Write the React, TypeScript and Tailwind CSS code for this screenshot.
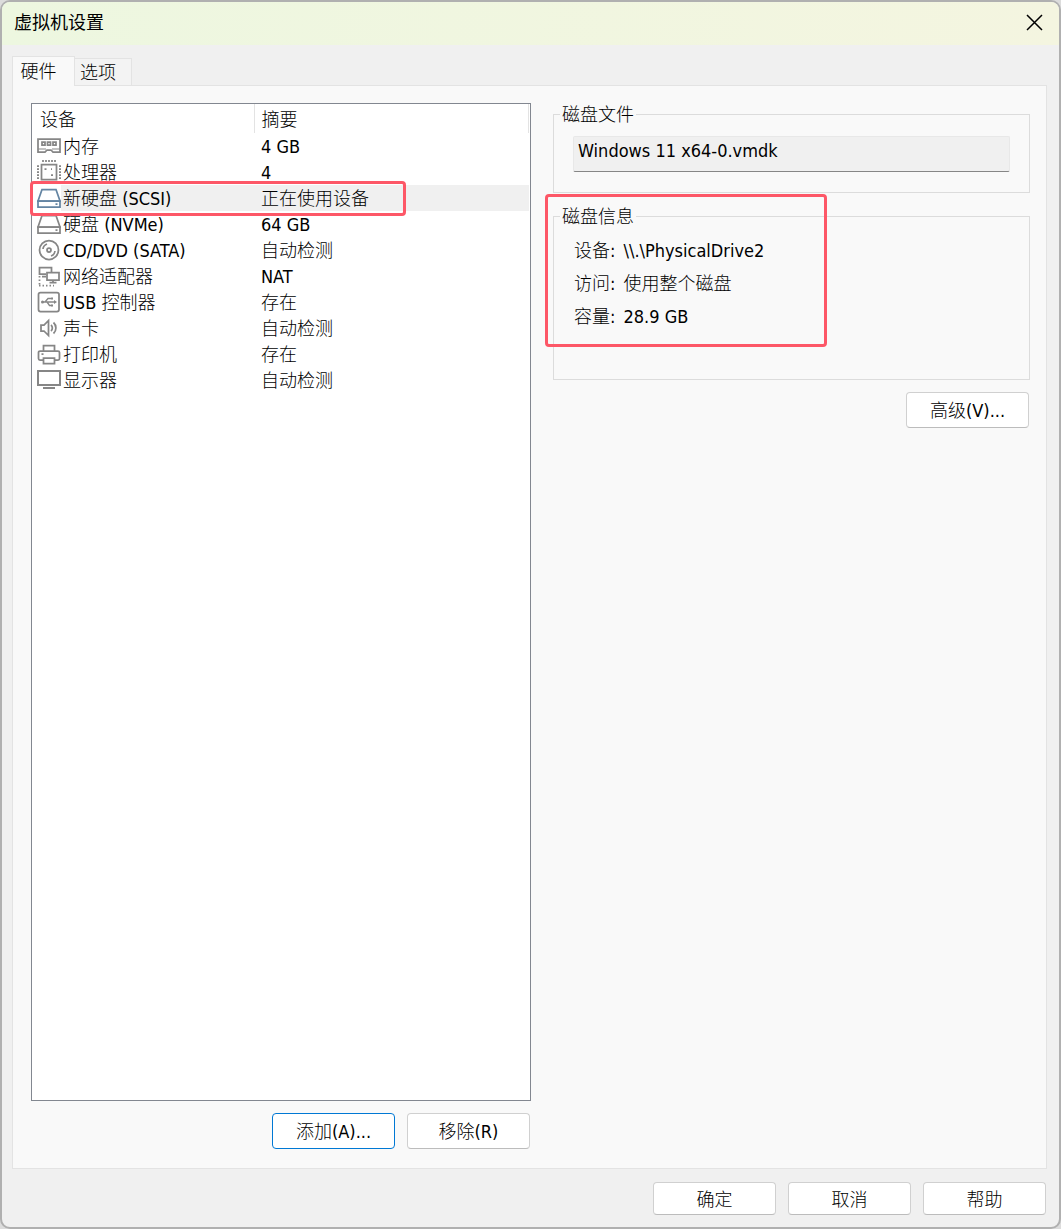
import { useState } from "react";
import type { ReactNode } from "react";
import clsx from "clsx";

type Device = {
  name: string;
  summary: string;
  icon: ReactNode;
};

const diskIcon = (
  <>
    <path d="M5 4.5h14L23 16H1z" />
    <path d="M1 16h22v6H1z" />
    <path d="M18.5 19h2" />
  </>
);

const devices: Device[] = [
  {
    name: "内存",
    summary: "4 GB",
    icon: (
      <>
        <path d="M1 6h22v13h-7l-2-2h-4l-2 2H1z" />
        <path d="M1 16h8M15 16h8" strokeWidth="1" />
        <path d="M5 9h3v3H5zM10.5 9h3v3h-3zM16 9h3v3h-3z" />
      </>
    ),
  },
  {
    name: "处理器",
    summary: "4",
    icon: (
      <>
        <path d="M4.5 5.5h15v15h-15z" />
        <path d="M6 1v2M9 1v2M12 1v2M15 1v2M18 1v2M6 23v2M9 23v2M12 23v2M15 23v2M18 23v2" />
        <path d="M0 7h2M0 10h2M0 13h2M0 16h2M0 19h2M22 7h2M22 10h2M22 13h2M22 16h2M22 19h2" />
        <path d="M7.500 10h2M14 10h1M14 16h2" />
      </>
    ),
  },
  { name: "新硬盘 (SCSI)", summary: "正在使用设备", icon: diskIcon },
  { name: "硬盘 (NVMe)", summary: "64 GB", icon: diskIcon },
  {
    name: "CD/DVD (SATA)",
    summary: "自动检测",
    icon: (
      <>
        <circle cx="12" cy="13" r="9.5" />
        <circle cx="12" cy="13" r="2" />
        <path d="M6 12a6 6 0 0 1 4-5M18 14a6 6 0 0 1-4 5" />
      </>
    ),
  },
  {
    name: "网络适配器",
    summary: "NAT",
    icon: (
      <>
        <path d="M9 11H2.5V4.5h12V9" />
        <path d="M10 9.5h12V17H10zM16 17v2.5M12.5 19.5h7M5 13.5h4" />
        <path d="M2.5 13v10M2 22.5h15" strokeDasharray="1.5 2" />
      </>
    ),
  },
  {
    name: "USB 控制器",
    summary: "存在",
    icon: (
      <>
        <rect x="1.5" y="3.5" width="20.5" height="19" rx="2" />
        <path d="M5 13h13M8 13l3-3.5h3M10 13l2.5 3.5h2" strokeWidth="1.3" />
        <path d="M17 11l3 2-3 2z" fill="currentColor" stroke="none" />
        <path
          d="M14 8.5h2v2h-2zM14 15.5h2v2h-2z"
          fill="currentColor"
          stroke="none"
        />
        <circle cx="5.5" cy="13" r="1.5" fill="currentColor" stroke="none" />
      </>
    ),
  },
  {
    name: "声卡",
    summary: "自动检测",
    icon: (
      <>
        <path d="M4 10h3l4.5-4.5v15L7 16H4z" />
        <path d="M14 10a4 4 0 0 1 0 6M16.5 7.5a7.5 7.5 0 0 1 0 11" />
      </>
    ),
  },
  {
    name: "打印机",
    summary: "存在",
    icon: (
      <>
        <path d="M6.5 10V4.5h11V10" />
        <path d="M6 19H3a1.5 1.5 0 0 1-1.5-1.5v-6A1.5 1.5 0 0 1 3 10h18a1.5 1.5 0 0 1 1.5 1.5v6A1.5 1.5 0 0 1 21 19h-3" />
        <path d="M6.5 17h11v5.5h-11zM4.5 13h2" />
      </>
    ),
  },
  {
    name: "显示器",
    summary: "自动检测",
    icon: (
      <>
        <path d="M1 4h22v14H1z" strokeWidth="2" />
        <path d="M6 21h12" strokeWidth="2" />
      </>
    ),
  },
];

const diskInfo = [
  { label: "设备:", value: "\\\\.\\PhysicalDrive2" },
  { label: "访问:", value: "使用整个磁盘" },
  { label: "容量:", value: "28.9 GB" },
];

// Red frame drawn over a part of the dialog
function Highlight({ className }: { className: string }) {
  return (
    <span
      className={clsx(
        "pointer-events-none absolute z-10 rounded border-3 border-[#fd5767]",
        className,
      )}
    />
  );
}

function Button({
  children,
  primary,
  className,
}: {
  children: ReactNode;
  primary?: boolean;
  className?: string;
}) {
  return (
    <button
      type="button"
      className={clsx(
        "flex w-[123px] items-center justify-center rounded border bg-white pt-0.5",
        primary ? "border-[#0078d4]" : "border-[#d0d0d0] border-b-[#bcbcbc]",
        className,
      )}
    >
      {children}
    </button>
  );
}

export default function App() {
  const [selected, setSelected] = useState(2);

  return (
    <div className="flex min-h-screen bg-[#dcdcdc] font-['DejaVu_Sans_Condensed','Noto_Sans_CJK_SC',sans-serif] text-lg leading-[22px] font-light text-black">
      <main className="flex flex-1 flex-col overflow-hidden rounded-[10px] border-2 border-[#b0b0b0] bg-[#f0f0f0]">
        <header className="flex h-[43px] items-center justify-between bg-linear-to-r from-[#edf7e0] to-[#f4f5e0] pr-4 pb-0.5 pl-3">
          <h1 className="font-normal">虚拟机设置</h1>
          <button type="button" aria-label="关闭">
            <svg
              width="17"
              height="17"
              viewBox="0 0 17 17"
              stroke="currentColor"
              strokeWidth="1.5"
            >
              <path d="M1 1l15 15M16 1L1 16" />
            </svg>
          </button>
        </header>

        <div className="flex flex-1 flex-col pt-[11px] pr-3 pb-3 pl-2.5">
          <div role="tablist" className="flex items-end">
            <button
              type="button"
              role="tab"
              aria-selected="true"
              className="z-10 -mb-px h-[30px] w-[63px] border border-b-0 border-[#e3e3e3] bg-[#f9f9f9] pr-2.5"
            >
              硬件
            </button>
            <button
              type="button"
              role="tab"
              aria-selected="false"
              className="h-[27px] w-[57px] border border-b-0 border-l-0 border-[#e3e3e3] bg-[#f3f3f3] pt-0.5 pr-2.5"
            >
              选项
            </button>
          </div>

          <div className="flex flex-1 gap-[22px] border border-[#e3e3e3] bg-[#f9f9f9] pt-[17px] pr-4 pb-[19px] pl-[18px]">
            <section className="flex w-[500px] flex-col gap-3">
              <div className="flex-1 border border-[#828790] bg-white pr-px">
                <table className="w-full table-fixed text-left">
                  <colgroup>
                    <col className="w-[29px]" />
                    <col className="w-[193px]" />
                    <col />
                  </colgroup>
                  <thead>
                    <tr className="h-[29px]">
                      <th
                        colSpan={2}
                        className="border-r border-[#e3e3e3] pt-0.5 pl-2 font-light"
                      >
                        设备
                      </th>
                      <th className="border-r border-[#e3e3e3] pt-0.5 pl-[7px] font-light">
                        摘要
                      </th>
                    </tr>
                  </thead>
                  <tbody>
                    {devices.map((device, i) => (
                      <tr
                        key={device.name}
                        className="h-[26px]"
                        onClick={() => setSelected(i)}
                      >
                        <td className="relative pl-[5px]">
                          <svg
                            width="24"
                            height="26"
                            viewBox="0 0 24 26"
                            fill="none"
                            stroke="currentColor"
                            strokeWidth="1.75"
                            className={clsx(
                              "block",
                              i === selected
                                ? "text-[#6485a3]"
                                : "text-[#868686]",
                            )}
                          >
                            {device.icon}
                          </svg>
                          {i === 2 && (
                            <Highlight className="-top-1 -left-0.5 h-[35px] w-[376px]" />
                          )}
                        </td>
                        <td
                          className={clsx(
                            "pt-0.5 pl-0.5 whitespace-nowrap",
                            i === selected && "bg-[#f0f0f0]",
                          )}
                        >
                          {device.name}
                        </td>
                        <td
                          className={clsx(
                            "pt-0.5 pl-[7px] whitespace-nowrap",
                            i === selected && "bg-[#f0f0f0]",
                          )}
                        >
                          {device.summary}
                        </td>
                      </tr>
                    ))}
                  </tbody>
                </table>
              </div>
              <div className="flex justify-end gap-3 pr-px">
                <Button primary className="h-9">
                  添加(A)...
                </Button>
                <Button className="h-9">移除(R)</Button>
              </div>
            </section>

            <section className="flex min-w-0 flex-1 flex-col gap-3">
              <fieldset className="border border-[#dcdcdc] px-[19px] pt-2.5 pb-5">
                <legend className="-ml-[13px] px-0.5 pt-px leading-[22px]">
                  磁盘文件
                </legend>
                <input
                  type="text"
                  readOnly
                  aria-label="磁盘文件"
                  defaultValue="Windows 11 x64-0.vmdk"
                  className="block h-9 w-full rounded-xs border border-[#e8e8e8] border-b-[#868686] bg-[#f0f0f0] px-1 pb-2 outline-none"
                />
              </fieldset>

              <fieldset className="relative border border-[#dcdcdc] px-5 pt-1.5 pb-[46px]">
                <legend className="-ml-3.5 px-0.5 pt-px leading-[22px]">
                  磁盘信息
                </legend>
                <dl className="leading-[33px]">
                  {diskInfo.map((item) => (
                    <div key={item.label} className="flex gap-2">
                      <dt>{item.label}</dt>
                      <dd>{item.value}</dd>
                    </div>
                  ))}
                </dl>
                <Highlight className="-top-[34px] -left-[9px] h-[153px] w-[282px]" />
              </fieldset>

              <Button className="mr-px h-9 self-end">高级(V)...</Button>
            </section>
          </div>

          <footer className="flex justify-end gap-3 pt-[13px] pr-px">
            <Button className="h-[33px]">确定</Button>
            <Button className="h-[33px]">取消</Button>
            <Button className="h-[33px]">帮助</Button>
          </footer>
        </div>
      </main>
    </div>
  );
}
